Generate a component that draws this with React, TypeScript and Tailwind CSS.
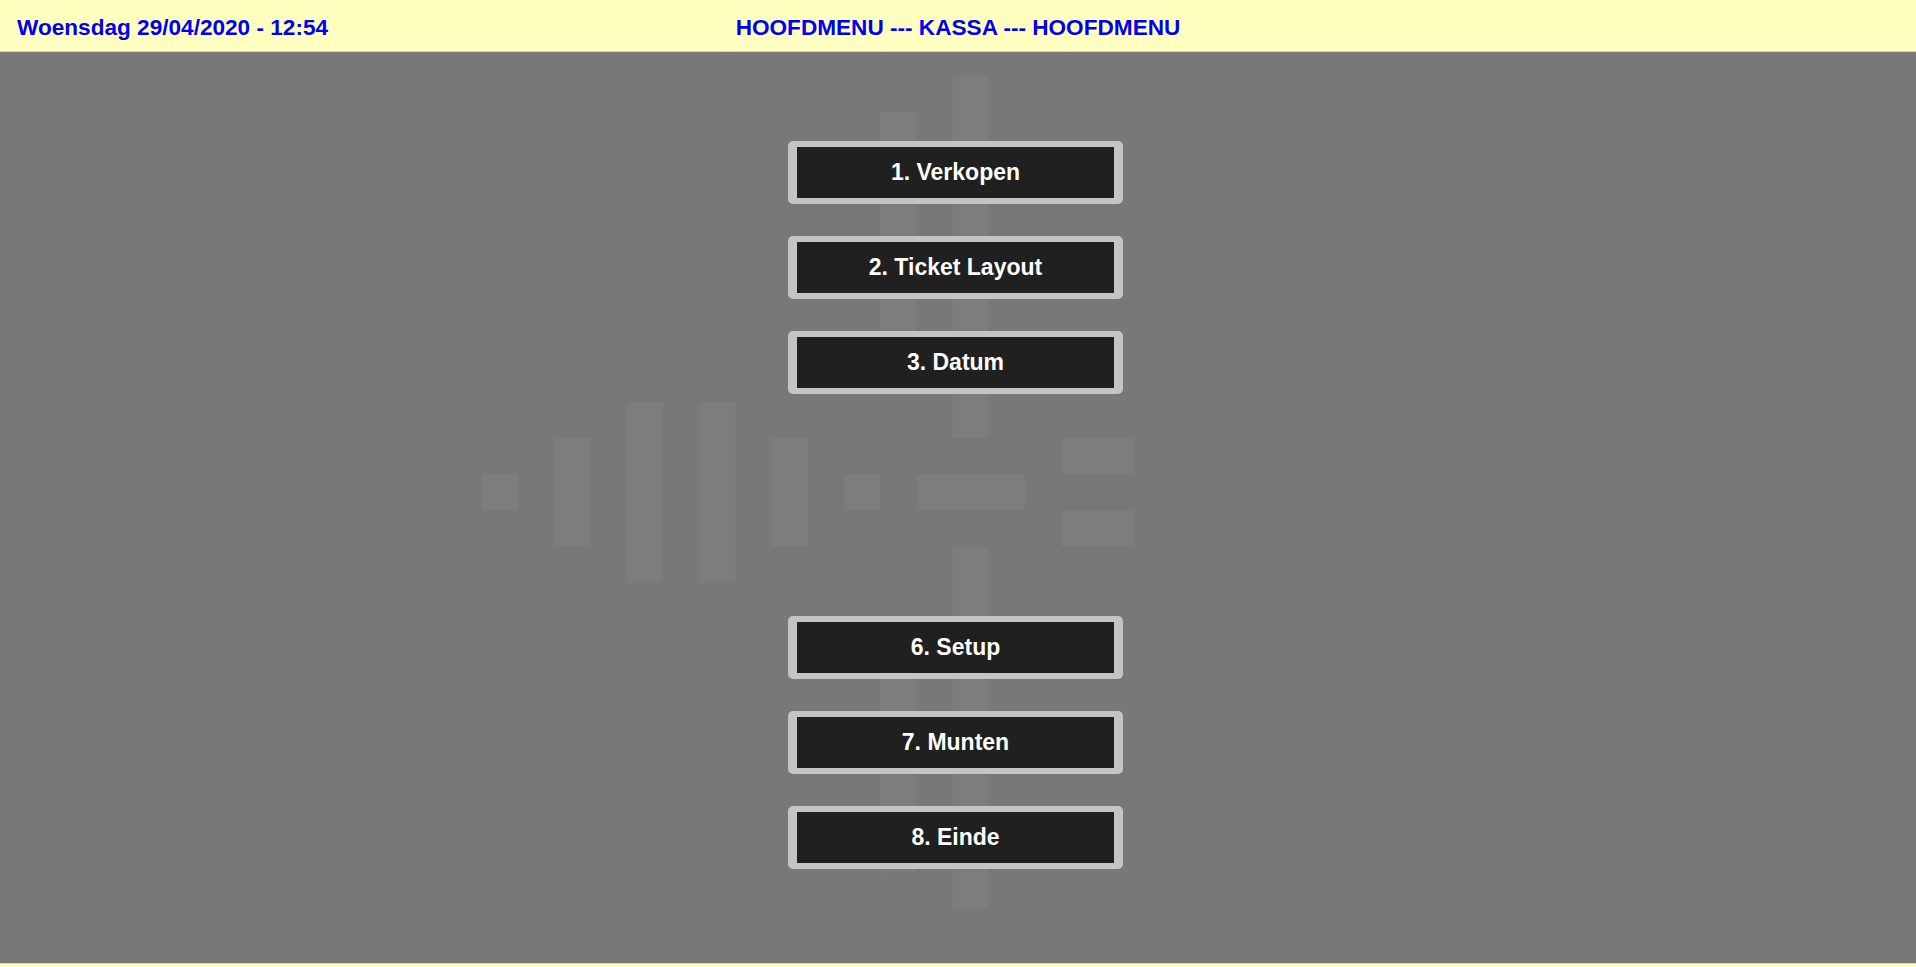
import React from 'react'

const MENU = [
  { id: 1, label: '1. Verkopen' },
  { id: 2, label: '2. Ticket Layout' },
  { id: 3, label: '3. Datum' },
  { id: 4, label: '' },
  { id: 5, label: '' },
  { id: 6, label: '6. Setup' },
  { id: 7, label: '7. Munten' },
  { id: 8, label: '8. Einde' },
]

// faint background logo, in grid units
const LOGO_RECTS: [number, number, number, number][] = [
  [0, 11, 1, 1],
  [2, 10, 1, 3],
  [4, 9, 1, 5],
  [6, 9, 1, 5],
  [8, 10, 1, 3],
  [10, 11, 1, 1],
  [12, 11, 3, 1],
  [13, 0, 1, 10],
  [13, 13, 1, 10],
  [11, 1, 1, 7],
  [11, 15, 1, 7],
  [16, 10, 2, 1],
  [16, 12, 2, 1],
]

function Logo() {
  return (
    <svg
      className="absolute left-[482px] top-[24px] w-[651.6px] h-[832.6px] pointer-events-none"
      viewBox="0 0 18 23"
      preserveAspectRatio="none"
    >
      {LOGO_RECTS.map(([x, y, w, h], i) => (
        <rect key={i} x={x} y={y} width={w} height={h} fill="#7d7d7d" />
      ))}
    </svg>
  )
}

function MenuButton({ label }: { label: string }) {
  if (!label) return <div className="h-[63px]" />
  return (
    <button className="w-[335px] h-[63px] rounded-[5px] bg-[#c4c4c4] px-[9px] py-[6px] cursor-pointer">
      <div className="w-full h-full bg-[#202020] flex items-center justify-center text-white font-bold text-[23px]">
        {label}
      </div>
    </button>
  )
}

export default function App() {
  return (
    <div className="h-screen flex flex-col overflow-hidden font-['Liberation_Sans',Arial,sans-serif]">
      <div className="h-[52px] shrink-0 bg-[#ffffc0] border-b border-[#d6d6a8] grid grid-cols-3 items-center px-[17px] pt-[4px] text-[#0000ee] font-bold text-[22.6px]">
        <div>Woensdag 29/04/2020 - 12:54</div>
        <div className="text-center whitespace-nowrap">HOOFDMENU --- KASSA --- HOOFDMENU</div>
        <div />
      </div>

      <div className="relative flex-1 bg-[#787878] flex items-center justify-center pb-[5px]">
        <Logo />
        <div className="relative flex flex-col gap-[32px] mr-[5px]">
          {MENU.map((m) => (
            <MenuButton key={m.id} label={m.label} />
          ))}
        </div>
      </div>

      <div className="h-[4px] shrink-0 bg-[#ffffc0] border-t border-[#d6d6a8]" />
    </div>
  )
}
